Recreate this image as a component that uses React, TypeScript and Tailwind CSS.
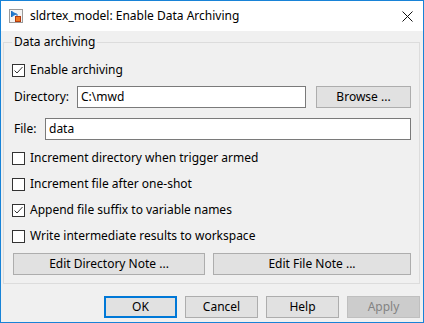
import React from "react";

const font = { fontFamily: '"Noto Sans", "Open Sans", sans-serif' };

function Check({ checked }: { checked?: boolean }) {
  return (
    <div className="w-[13px] h-[13px] border border-[#333333] bg-white shrink-0 relative">
      {checked && (
        <svg width="11" height="11" viewBox="0 0 11 11" className="absolute left-0 top-0">
          <polyline points="1.5,5.5 4,8 9.5,2" fill="none" stroke="#333333" strokeWidth="1" />
        </svg>
      )}
    </div>
  );
}

function CheckRow({ label, checked, h }: { label: string; checked?: boolean; h: string }) {
  return (
    <div className={`flex items-center ${h}`}>
      <Check checked={checked} />
      <span className="ml-[5px] text-[12px] leading-[16px] text-black">{label}</span>
    </div>
  );
}

export default function App() {
  return (
    <div
      className="w-[424px] h-[323px] border border-[#1883d7] bg-[#f0f0f0] flex flex-col overflow-hidden"
      style={font}
    >
      {/* Title bar */}
      <div className="h-[30px] bg-white flex items-center shrink-0">
        <div className="ml-[8px] w-[14px] h-[14px]">
          <svg width="14" height="14" viewBox="0 0 14 14">
            <rect x="0.5" y="0.5" width="13" height="13" fill="#f4f4f4" stroke="#9a9a9a" />
            <rect x="2" y="2" width="1" height="6" fill="#1f6fc0" />
            <polygon points="3,2.5 7,5 3,7.5" fill="#2b8be0" stroke="#1f6fc0" strokeWidth="0.6" />
            <line x1="3" y1="5" x2="8" y2="5" stroke="#1f6fc0" strokeWidth="1" />
            <line x1="8" y1="5" x2="8" y2="7" stroke="#1f6fc0" strokeWidth="1" />
            <rect x="6.5" y="7.5" width="5" height="5" fill="#f07a22" stroke="#b23a10" />
          </svg>
        </div>
        <span className="ml-[7px] text-[12px] leading-[16px] text-black">
          sldrtex_model: Enable Data Archiving
        </span>
        <div className="ml-auto mr-[10px] w-[11px] h-[11px]">
          <svg width="11" height="11" viewBox="0 0 11 11">
            <line x1="0.5" y1="0.5" x2="10.5" y2="10.5" stroke="#111" strokeWidth="1" />
            <line x1="10.5" y1="0.5" x2="0.5" y2="10.5" stroke="#111" strokeWidth="1" />
          </svg>
        </div>
      </div>

      {/* Body */}
      <div className="flex flex-col pt-[3px]">
        <fieldset className="mx-[2px] mr-[3px] border border-[#dcdcdc] px-[8px] pb-[8px] pt-0 min-w-0">
          <legend className="px-[2px] text-[12px] leading-[16px] text-black">Data archiving</legend>
          <CheckRow label="Enable archiving" checked h="h-[20px] mt-[10px]" />

          <div className="flex items-center h-[22px] mt-[6px]">
            <span className="w-[65px] pl-[2px] text-[12px] leading-[16px] text-black shrink-0">Directory:</span>
            <div className="w-[229px] h-[22px] border border-[#7a7a7a] bg-white pl-[3px] flex items-center text-[12px] leading-[16px] text-black">
              C:\mwd
            </div>
            <div className="ml-[10px] w-[95px] h-[22px] border border-[#adadad] bg-[#e1e1e1] flex items-center justify-center text-[12px] leading-[16px] text-black">
              Browse ...
            </div>
          </div>

          <div className="flex items-center h-[22px] mt-[10px]">
            <span className="w-[33px] pl-[2px] text-[12px] leading-[16px] text-black shrink-0">File:</span>
            <div className="w-[366px] h-[22px] border border-[#7a7a7a] bg-white pl-[3px] flex items-center text-[12px] leading-[16px] text-black">
              data
            </div>
          </div>

          <div className="mt-[5px] flex flex-col">
            <CheckRow label="Increment directory when trigger armed" h="h-[26px]" />
            <CheckRow label="Increment file after one-shot" h="h-[26px]" />
            <CheckRow label="Append file suffix to variable names" checked h="h-[26px]" />
            <CheckRow label="Write intermediate results to workspace" h="h-[26px]" />
          </div>

          <div className="flex mt-[4px] gap-[8px] ml-[1px]">
            <div className="w-[192px] h-[22px] border border-[#adadad] bg-[#e1e1e1] flex items-center justify-center text-[12px] leading-[16px] text-black">
              Edit Directory Note ...
            </div>
            <div className="w-[198px] h-[22px] border border-[#adadad] bg-[#e1e1e1] flex items-center justify-center text-[12px] leading-[16px] text-black">
              Edit File Note ...
            </div>
          </div>
        </fieldset>

        <div className="flex justify-end gap-[8px] pr-[3px] mt-[12px]">
          <div className="w-[73px] h-[22px] border-2 border-[#0078d7] bg-[#e1e1e1] flex items-center justify-center text-[12px] leading-[16px] text-black">
            OK
          </div>
          <div className="w-[73px] h-[22px] border border-[#adadad] bg-[#e1e1e1] flex items-center justify-center text-[12px] leading-[16px] text-black">
            Cancel
          </div>
          <div className="w-[73px] h-[22px] border border-[#adadad] bg-[#e1e1e1] flex items-center justify-center text-[12px] leading-[16px] text-black">
            Help
          </div>
          <div className="w-[73px] h-[22px] border border-[#bfbfbf] bg-[#cccccc] flex items-center justify-center text-[12px] leading-[16px] text-[#838383]">
            Apply
          </div>
        </div>
      </div>
    </div>
  );
}
